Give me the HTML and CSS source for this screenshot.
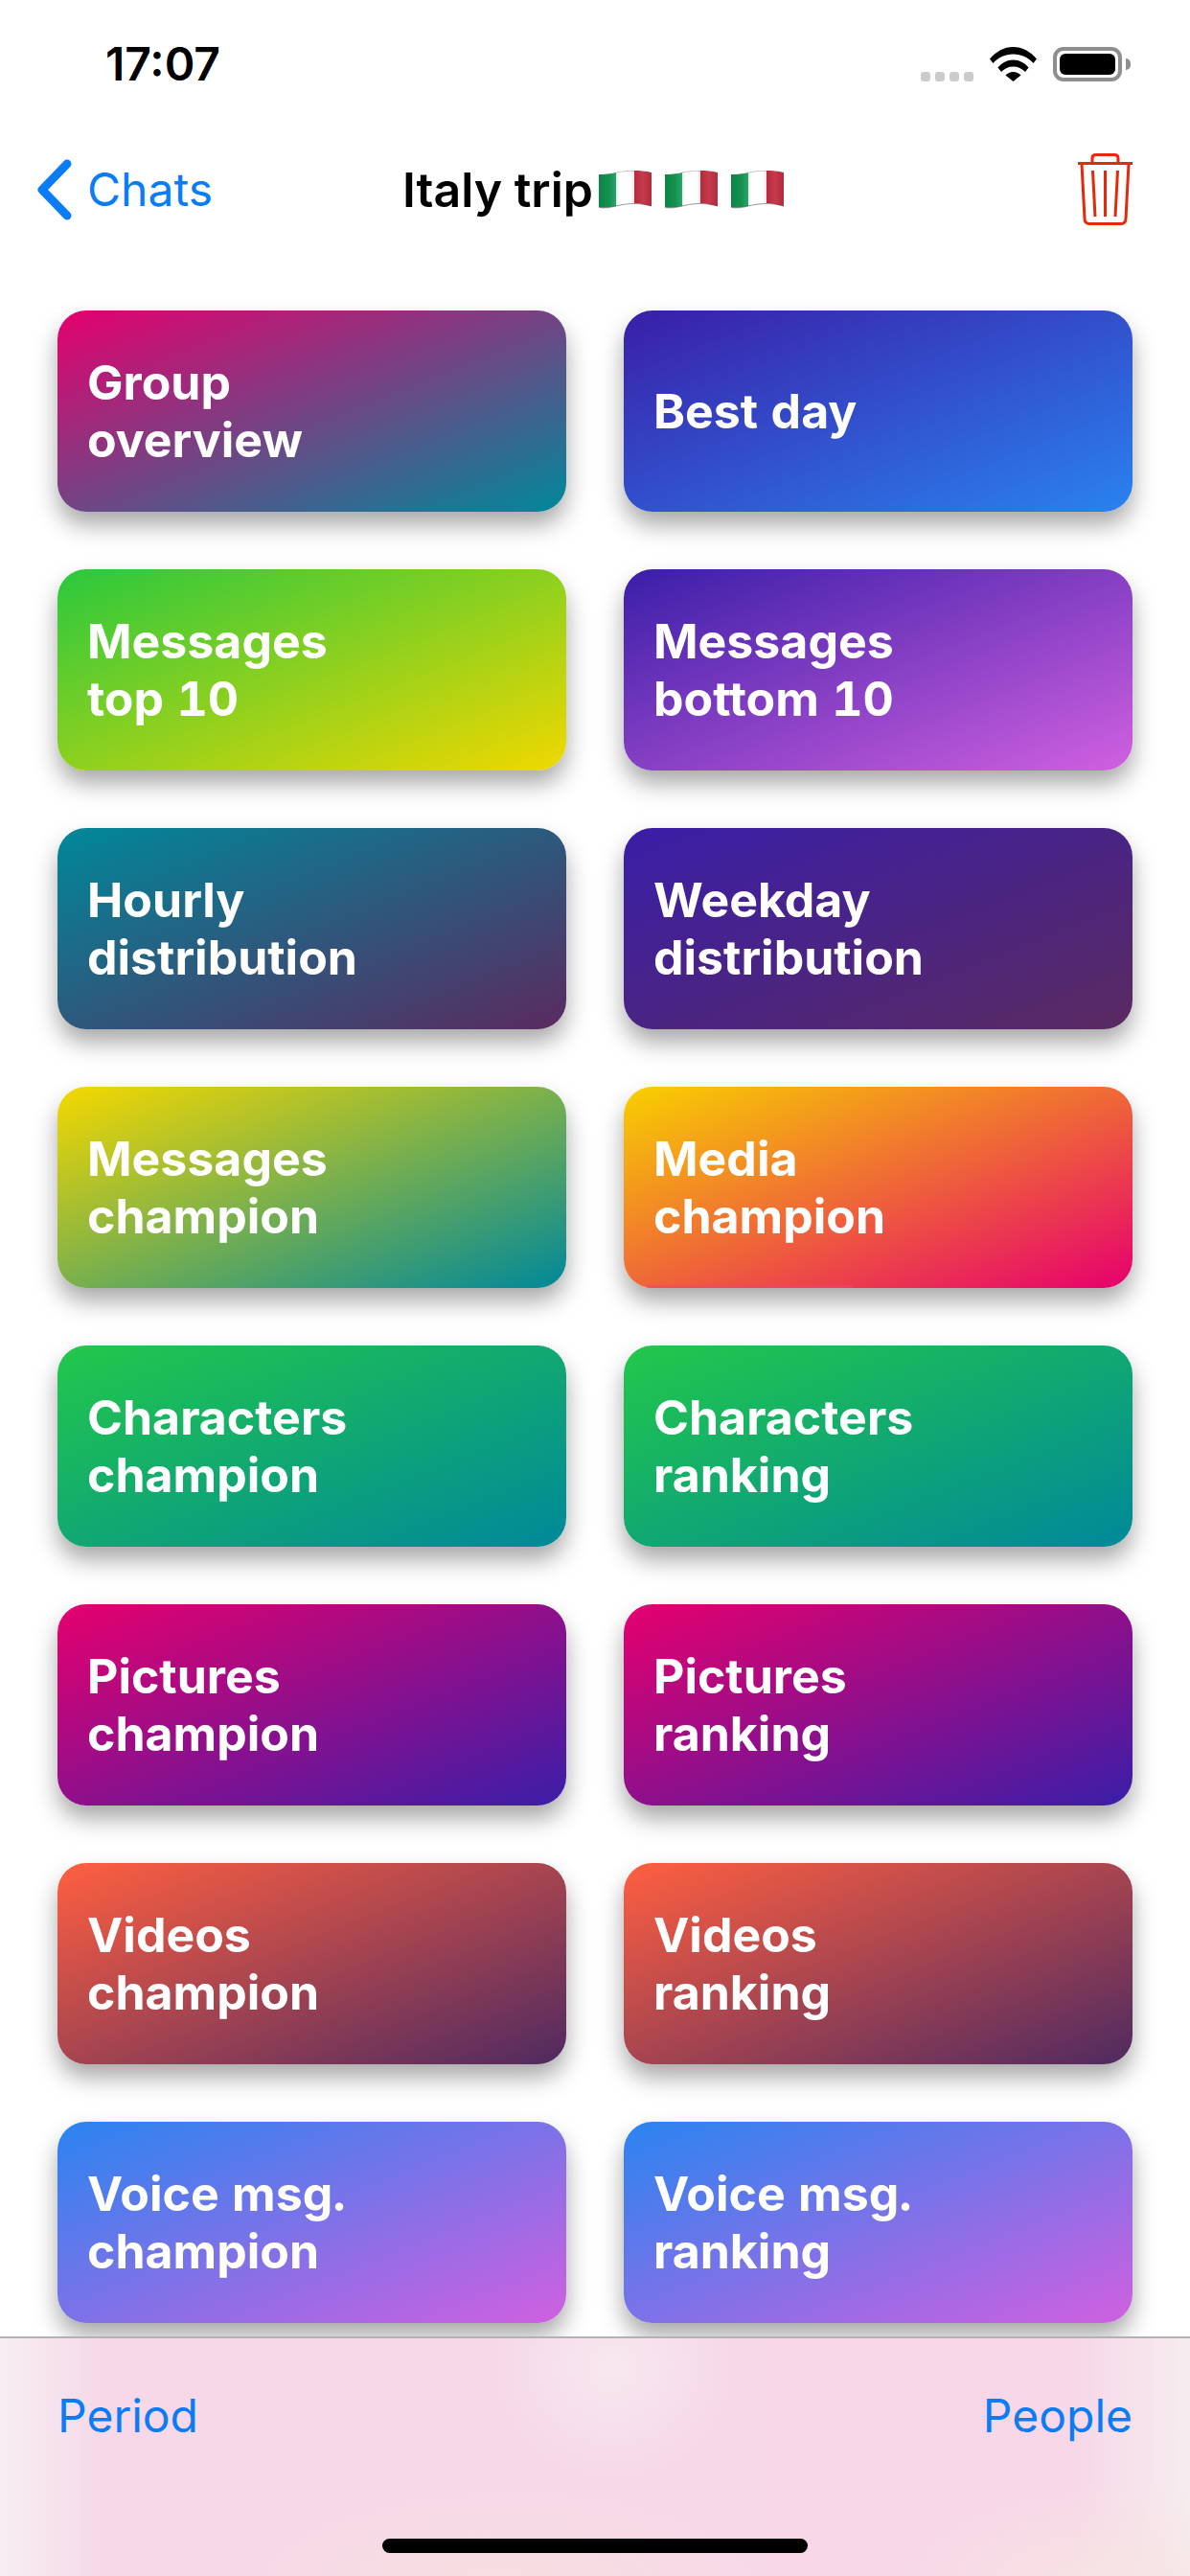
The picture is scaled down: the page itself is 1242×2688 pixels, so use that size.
FILE: index.html
```html
<!DOCTYPE html>
<html lang="en">
<head>
    <meta charset="UTF-8">
    <meta name="viewport" content="width=device-width, initial-scale=1.0">
    <title>Italy trip</title>
    <link rel="stylesheet" href="styles.css">
</head>
<body>
    <svg class="defs" width="0" height="0">
        <defs>
            <linearGradient id="green" x1="0" x2="1" y1="0" y2="0"><stop offset="0" stop-color="#0a8548"/><stop offset="0.6" stop-color="#15924f"/><stop offset="1" stop-color="#2ba56c"/></linearGradient>
            <linearGradient id="white" x1="0" x2="1" y1="0" y2="0"><stop offset="0" stop-color="#e6efe9"/><stop offset="0.2" stop-color="#fff"/><stop offset="0.8" stop-color="#fff"/><stop offset="1" stop-color="#f3e4e6"/></linearGradient>
            <linearGradient id="red" x1="0" x2="1" y1="0" y2="0"><stop offset="0" stop-color="#b8283c"/><stop offset="0.5" stop-color="#c63a4c"/><stop offset="1" stop-color="#b12a3d"/></linearGradient>
            <symbol id="flag-it" viewBox="0 0 55 40">
                <path d="M0 4C6 4 12 3.500 18 2V37C12 38.500 6 39 0 38Z" fill="url(#green)"/>
                <path d="M18 2C24 0.800 30 0 37 0V34C30 34.500 24 35.500 18 37Z" fill="url(#white)"/>
                <path d="M37 0C43 0 49 0.500 55 2V37C49 35.500 43 34 37 34Z" fill="url(#red)"/>
                <path d="M0 38.500C6 39.500 12 38.500 18 37C24 35.500 30 34.500 37 34.500C43 34.500 49 35.500 55 37" fill="none" stroke="#000" stroke-opacity="0.4" stroke-width="1"/>
                <path d="M18 2C24 0.800 30 0.300 37 0.300" fill="none" stroke="#000" stroke-opacity="0.22" stroke-width="1"/>
            </symbol>
        </defs>
    </svg>

    <div class="screen">
        <div class="status-bar">
            <span class="time">17:07</span>
            <div class="status-icons">
                <div class="signal"><i></i><i></i><i></i><i></i></div>
                <svg class="wifi" viewBox="0 0 49 36"><path d="M0 12.500C6.500 4.800 15 0 24.500 0S42.500 4.800 49 12.500L45.500 17C40 11 33 7.500 24.500 7.500S9 11 3.500 17Z"/><path d="M8.500 21.500C12.500 16.500 18 13.500 24.500 13.500S36.500 16.500 40.500 21.500L37 26C33.500 22.500 29.500 20.500 24.500 20.500S15.500 22.500 12 26Z"/><path d="M16.500 29.500C18.500 27.300 21.500 26 24.500 26S30.500 27.300 32.500 29.500L24.500 36Z"/></svg>
                <div class="battery"><div class="battery-fill"></div></div>
            </div>
        </div>

        <div class="nav-bar">
            <div class="back">
                <svg class="chevron" viewBox="0 0 36 64"><path d="M31 5L5 32L31 59" fill="none" stroke="#0a7cf5" stroke-width="9" stroke-linecap="round" stroke-linejoin="round"/></svg>
                <span>Chats</span>
            </div>
            <div class="title">
                <span>Italy trip</span>
                <svg class="flag"><use href="#flag-it"/></svg>
                <svg class="flag"><use href="#flag-it"/></svg>
                <svg class="flag"><use href="#flag-it"/></svg>
            </div>
            <svg class="trash" viewBox="0 0 57 75" fill="none" stroke="#e42a0c" stroke-width="3"><path d="M0 10.500H57"/><path d="M15 10V5C15 2.500 17 1.500 19 1.500H38C40 1.500 42 2.500 42 5V10"/><path d="M4 11L7 68C7 71.500 9 73.500 12 73.500H45C48 73.500 50 71.500 50 68L53 11"/><path d="M15.500 18L18 66"/><path d="M28.500 18V66"/><path d="M41.500 18L39 66"/></svg>
        </div>

        <div class="content">
            <div class="card-grid">
                <div class="card pink-teal">Group<br>overview</div>
                <div class="card indigo-blue">Best day</div>
                <div class="card green-yellow">Messages<br>top 10</div>
                <div class="card indigo-orchid">Messages<br>bottom 10</div>
                <div class="card teal-plum">Hourly<br>distribution</div>
                <div class="card indigo-plum">Weekday<br>distribution</div>
                <div class="card yellow-teal">Messages<br>champion</div>
                <div class="card yellow-pink">Media<br>champion</div>
                <div class="card green-teal">Characters<br>champion</div>
                <div class="card green-teal">Characters<br>ranking</div>
                <div class="card pink-indigo">Pictures<br>champion</div>
                <div class="card pink-indigo">Pictures<br>ranking</div>
                <div class="card coral-plum">Videos<br>champion</div>
                <div class="card coral-plum">Videos<br>ranking</div>
                <div class="card blue-orchid">Voice msg.<br>champion</div>
                <div class="card blue-orchid">Voice msg.<br>ranking</div>
            </div>
        </div>

        <div class="toolbar">
            <div class="toolbar-links">
                <span>Period</span>
                <span>People</span>
            </div>
            <div class="home-indicator"></div>
        </div>
    </div>
</body>
</html>
```

FILE: styles.css
```css
* { box-sizing: border-box; }
body { margin: 0; font-family: Inter, "Liberation Sans", sans-serif; background: #fff; }
.defs { position: absolute; }
.screen { width: 1242px; height: 2688px; display: flex; flex-direction: column; overflow: hidden; }

.status-bar { height: 132px; padding: 49px 71px 0 110px; display: flex; justify-content: space-between; align-items: flex-start; flex-shrink: 0; }
.time { font-size: 48px; font-weight: 600; line-height: 36px; color: #000; }
.status-icons { display: flex; align-items: flex-start; }
.signal { display: flex; gap: 5px; margin-top: 26px; margin-right: 17px; }
.signal i { width: 10px; height: 10px; border-radius: 3px; background: #ccc; }
.wifi { width: 49px; height: 36px; margin-right: 17px; }
.battery { position: relative; width: 72px; height: 36px; border: 4px solid #8e8e8e; border-radius: 11px; padding: 3px; }
.battery::after { content: ""; position: absolute; right: -13px; top: 8px; width: 5px; height: 12px; background: #8e8e8e; border-radius: 0 5px 5px 0; }
.battery-fill { height: 100%; background: #000; border-radius: 6px; }

.nav-bar { position: relative; height: 132px; padding: 0 60px 0 39px; display: flex; align-items: center; justify-content: space-between; flex-shrink: 0; }
.back { display: flex; align-items: center; gap: 16px; color: #0a7cf5; font-size: 48px; margin-top: -1px; }
.chevron { width: 36px; height: 64px; }
.title { position: absolute; left: 420px; top: 36px; display: flex; align-items: center; font-size: 50px; font-weight: 600; color: #000; }
.flag { width: 55px; height: 40px; margin-left: 14px; }
.flag:first-of-type { margin-left: 6px; }
.trash { width: 57px; height: 75px; margin-top: -1px; }

.content { flex: 1; min-height: 0; overflow: hidden; padding: 60px 60px 0; }
.card-grid { display: grid; grid-template-columns: 531px 531px; grid-auto-rows: 210px; gap: 60px; }
.card { position: relative; display: flex; align-items: center; padding: 0 31px; border-radius: 30px; color: #fff; font-size: 50px; font-weight: 700; line-height: 60px; font-variant-numeric: tabular-nums; box-shadow: 0 14px 24px rgba(0, 0, 0, 0.34); }

.pink-teal { background: linear-gradient(to bottom right, #e6006e, #00889a); }
.indigo-blue { background: linear-gradient(to bottom right, #3a1ea8, #2a82f0); }
.green-yellow { background: linear-gradient(to bottom right, #2ac83e, #f0d800); }
.indigo-orchid { background: linear-gradient(to bottom right, #3a1ea8, #d060e0); }
.teal-plum { background: linear-gradient(to bottom right, #00889a, #5a2a60); }
.indigo-plum { background: linear-gradient(to bottom right, #3a1ea8, #5a2a60); }
.yellow-teal { background: linear-gradient(to bottom right, #f5d800, #00889a); }
.yellow-pink { background: linear-gradient(to bottom right, #f8d000, #e6006e); }
.yellow-pink::after { content: ""; position: absolute; left: 24px; bottom: 0; width: 215px; height: 3px; background: rgba(240, 70, 110, 0.55); }
.green-teal { background: linear-gradient(to bottom right, #22c84a, #00889a); }
.pink-indigo { background: linear-gradient(to bottom right, #e6006e, #3a1ea8); }
.coral-plum { background: linear-gradient(to bottom right, #ff5f40, #4f2a60); }
.blue-orchid { background: linear-gradient(to bottom right, #2a84f0, #d060e0); }

.toolbar { position: relative; height: 250px; flex-shrink: 0; border-top: 2px solid #b4b0b4; background: radial-gradient(ellipse 130px 120px at 640px 30px, rgba(247, 236, 241, 0.8), rgba(247, 236, 241, 0)), radial-gradient(ellipse 300px 110px at 520px 260px, rgba(247, 224, 224, 0.9), rgba(247, 224, 224, 0)), radial-gradient(ellipse 220px 110px at 1150px 260px, rgba(247, 228, 226, 0.9), rgba(247, 228, 226, 0)), linear-gradient(to right, #f7eef2 0, #f6d8e8 110px, #f7d7e8 1120px, #f6ecef 100%); }
.toolbar-links { display: flex; justify-content: space-between; padding: 50px 60px 0 60px; font-size: 48px; color: #0a7cf5; line-height: 62px; }
.home-indicator { position: absolute; left: 399px; bottom: 24px; width: 444px; height: 15px; border-radius: 8px; background: #000; }
```
